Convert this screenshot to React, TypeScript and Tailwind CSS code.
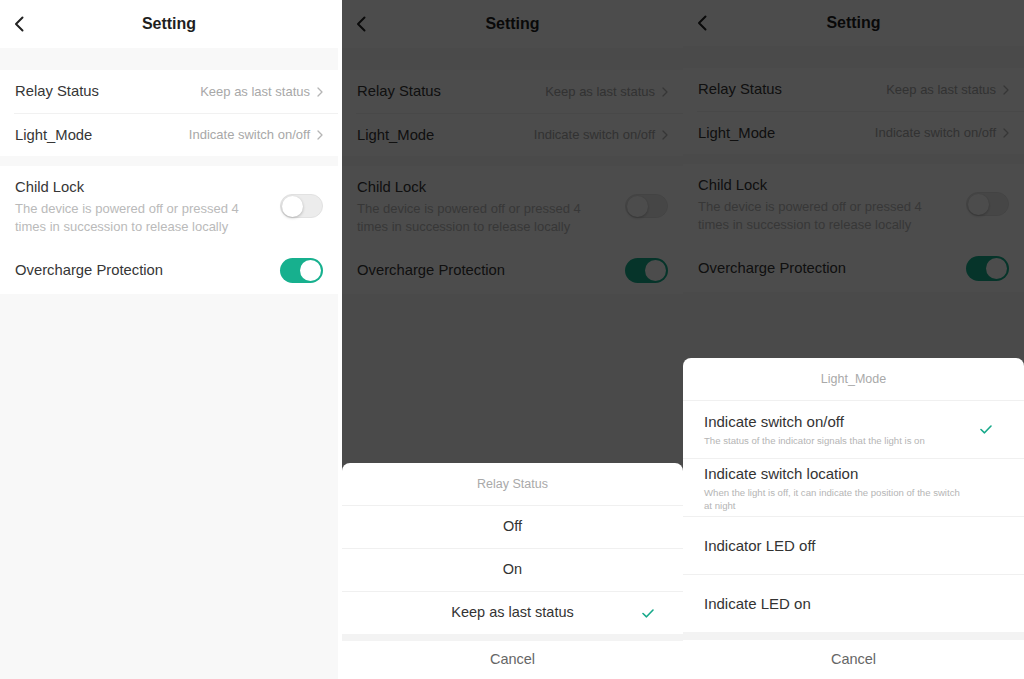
import React from "react";

function BackIcon() {
  return (
    <svg width="10" height="16" viewBox="0 0 10 16" fill="none">
      <path d="M8.5 1.5 L2 8 L8.5 14.5" stroke="#222" strokeWidth="2" strokeLinecap="round" strokeLinejoin="round" />
    </svg>
  );
}

function ChevronRight() {
  return (
    <svg width="6" height="10" viewBox="0 0 6 10" fill="none">
      <path d="M1 1 L5 5 L1 9" stroke="#b5b5b5" strokeWidth="1.3" strokeLinecap="round" strokeLinejoin="round" />
    </svg>
  );
}

function Check() {
  return (
    <svg width="12" height="9" viewBox="0 0 12 9" fill="none">
      <path d="M1 4.5 L4.5 7.8 L11 1" stroke="#17a98a" strokeWidth="1.6" strokeLinecap="round" strokeLinejoin="round" />
    </svg>
  );
}

function Toggle({ on }: { on: boolean }) {
  if (on) {
    return (
      <div className="flex h-[25px] w-[43px] items-center justify-end rounded-full bg-[#17b08e] p-[2px]">
        <div className="h-[21px] w-[21px] rounded-full bg-white" />
      </div>
    );
  }
  return (
    <div className="flex h-[24px] w-[43px] items-center justify-start rounded-full border border-[#e2e2e2] bg-[#ececec] p-[1px]">
      <div className="h-[21px] w-[21px] rounded-full bg-white shadow-[0_1px_3px_rgba(0,0,0,0.25)]" />
    </div>
  );
}

function Settings({ compact }: { compact: boolean }) {
  return (
    <div className="flex h-full flex-col bg-[#f8f8f8]">
      <div className={`grid grid-cols-[40px_1fr_40px] items-center bg-white ${compact ? "h-[46px]" : "h-[48px]"}`}>
        <div className="flex pl-[14px]">
          <BackIcon />
        </div>
        <div className="text-center text-[16px] font-bold text-[#1f1f1f]">Setting</div>
        <div />
      </div>
      <div className="h-[22px] shrink-0" />
      <div className="bg-white">
        <div className="flex h-[43px] items-center justify-between pl-[15px] pr-[15px]">
          <span className="text-[14.8px] text-[#363636]">Relay Status</span>
          <span className="flex items-center gap-[7px] text-[13px] text-[#a8a8a8]">
            Keep as last status
            <ChevronRight />
          </span>
        </div>
        <div className="ml-[14px] h-px bg-[#f1f1f1]" />
        <div className="flex h-[42px] items-center justify-between pl-[15px] pr-[15px]">
          <span className="text-[14.8px] text-[#363636]">Light_Mode</span>
          <span className="flex items-center gap-[7px] text-[13px] text-[#a8a8a8]">
            Indicate switch on/off
            <ChevronRight />
          </span>
        </div>
      </div>
      <div className="h-[10px] shrink-0" />
      <div className="bg-white">
        <div className="flex h-[80px] items-center justify-between pl-[15px] pr-[15px]">
          <div className="flex flex-col">
            <span className="text-[14.8px] leading-[20px] text-[#363636]">Child Lock</span>
            <span className="mt-[3px] w-[240px] text-[13px] leading-[18px] text-[#bababa]">
              The device is powered off or pressed 4 times in succession to release locally
            </span>
          </div>
          <Toggle on={false} />
        </div>
        <div className="flex h-[48px] items-center justify-between pl-[15px] pr-[15px]">
          <span className="text-[14.8px] text-[#363636]">Overcharge Protection</span>
          <Toggle on={true} />
        </div>
      </div>
    </div>
  );
}

function RelaySheet() {
  const opts = ["Off", "On", "Keep as last status"];
  return (
    <div className="absolute bottom-0 left-0 right-0 flex flex-col rounded-t-[8px] bg-white">
      <div className="flex h-[42px] items-center justify-center text-[12.5px] text-[#a9a9a9]">Relay Status</div>
      {opts.map((o, i) => (
        <div key={o} className="relative flex h-[43px] items-center justify-center border-t border-[#f0f0f0] text-[14.5px] text-[#333]">
          {o}
          {i === 2 && (
            <span className="absolute right-[29px] top-[17px]">
              <Check />
            </span>
          )}
        </div>
      ))}
      <div className="h-[7px] bg-[#f3f3f3]" />
      <div className="flex h-[38px] items-center justify-center text-[14.5px] text-[#666]">Cancel</div>
    </div>
  );
}

function LightSheet() {
  const opts: { t: string; d?: string; checked?: boolean }[] = [
    { t: "Indicate switch on/off", d: "The status of the indicator signals that the light is on", checked: true },
    { t: "Indicate switch location", d: "When the light is off, it can indicate the position of the switch at night" },
    { t: "Indicator LED off" },
    { t: "Indicate LED on" },
  ];
  return (
    <div className="absolute bottom-0 left-0 right-0 flex flex-col rounded-t-[8px] bg-white">
      <div className="flex h-[42px] items-center justify-center text-[12.5px] text-[#a9a9a9]">Light_Mode</div>
      {opts.map((o) => (
        <div key={o.t} className="flex h-[58px] items-center justify-between border-t border-[#f0f0f0] pl-[21px] pr-[32px]">
          <div className="flex flex-col">
            <span className="text-[15px] leading-[20px] text-[#333]">{o.t}</span>
            {o.d && (
              <span className="mt-[2px] w-[262px] text-[9.6px] leading-[13px] text-[#b5b5b5]">{o.d}</span>
            )}
          </div>
          {o.checked && <Check />}
        </div>
      ))}
      <div className="h-[8px] bg-[#f3f3f3]" />
      <div className="flex h-[39px] items-center justify-center text-[14.5px] text-[#666]">Cancel</div>
    </div>
  );
}

export default function App() {
  return (
    <div className="flex h-[679px] w-[1024px] overflow-hidden bg-white font-['Liberation_Sans',Arial,sans-serif]">
      <div className="h-full w-[338px] shrink-0">
        <Settings compact={false} />
      </div>
      <div className="h-full w-[4px] shrink-0 bg-white" />
      <div className="relative h-full w-[341px] shrink-0">
        <Settings compact={false} />
        <div className="absolute inset-0 bg-black/70" />
        <RelaySheet />
      </div>
      <div className="relative h-full w-[341px] shrink-0">
        <Settings compact={true} />
        <div className="absolute inset-0 bg-black/70" />
        <LightSheet />
      </div>
    </div>
  );
}
